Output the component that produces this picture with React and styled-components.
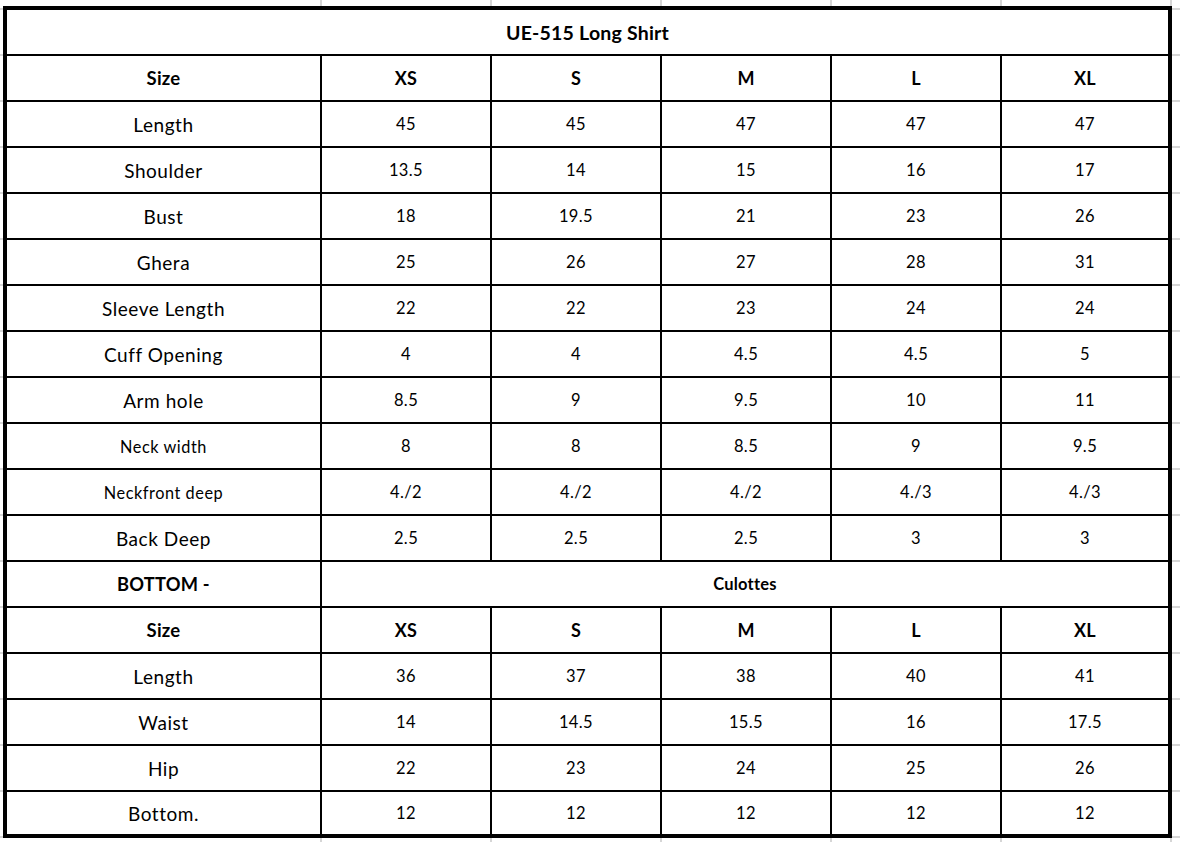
import styled, { createGlobalStyle } from "styled-components";

const GlobalStyle = createGlobalStyle`
    html, body {
        margin: 0;
        padding: 0;
    }
    body {
        width: 1180px;
        height: 842px;
        overflow: hidden;
        font-family: Lato, "Open Sans", sans-serif;
        color: #000;
        background-color: #fff;
        background-image:
            repeating-linear-gradient(to right, #d6d6d6 0 2px, transparent 2px 170px),
            repeating-linear-gradient(to bottom, transparent 0 8px, #d6d6d6 8px 10px, transparent 10px 46px);
        background-position: 320px 0, 0 0;
        background-size: 852px 100%, 100% 100%;
        background-repeat: no-repeat;
    }
`;

const Page = styled.div`
    padding: 6px 0 0 3px;
`;

const Sheet = styled.div`
    display: grid;
    grid-template-columns: 313px 168px 168px 168px 168px 166px;
    grid-template-rows: repeat(17, 44px) 42px;
    gap: 2px;
    width: max-content;
    border: 4px solid #000;
    background-color: #000;
`;

const Cell = styled.div`
    display: flex;
    align-items: center;
    justify-content: center;
    background-color: #fff;
    font-size: ${ p => p.$size || 16.5 }px;
    font-weight: ${ p => p.$bold ? 700 : 400 };
    letter-spacing: ${ p => p.$bold ? 0.2 : 0.4 }px;
    grid-column: ${ p => p.$span ? `span ${ p.$span }` : "auto" };
    white-space: nowrap;
`;

const Label = styled(Cell)`
    font-size: ${ p => p.$size || 19 }px;
    letter-spacing: ${ p => p.$bold ? 0.2 : 0.55 }px;
`;

const sizes = [ "XS", "S", "M", "L", "XL" ];

const shirt = [
    [ "Length", [ "45", "45", "47", "47", "47" ] ],
    [ "Shoulder", [ "13.5", "14", "15", "16", "17" ] ],
    [ "Bust", [ "18", "19.5", "21", "23", "26" ] ],
    [ "Ghera", [ "25", "26", "27", "28", "31" ] ],
    [ "Sleeve Length", [ "22", "22", "23", "24", "24" ] ],
    [ "Cuff Opening", [ "4", "4", "4.5", "4.5", "5" ] ],
    [ "Arm hole", [ "8.5", "9", "9.5", "10", "11" ] ],
    [ "Neck width", [ "8", "8", "8.5", "9", "9.5" ], 16.3 ],
    [ "Neckfront deep", [ "4./2", "4./2", "4./2", "4./3", "4./3" ], 16.3 ],
    [ "Back Deep", [ "2.5", "2.5", "2.5", "3", "3" ] ],
];

const bottom = [
    [ "Length", [ "36", "37", "38", "40", "41" ] ],
    [ "Waist", [ "14", "14.5", "15.5", "16", "17.5" ] ],
    [ "Hip", [ "22", "23", "24", "25", "26" ] ],
    [ "Bottom.", [ "12", "12", "12", "12", "12" ] ],
];

const SizeRow = () => (
    <>
        <Label $bold $size={ 18.5 }>Size</Label>
        { sizes.map( s => <Cell key={ s } $bold $size={ 18 }>{ s }</Cell> ) }
    </>
);

const Row = ( { label, values, small } ) => (
    <>
        <Label $size={ small }>{ label }</Label>
        { values.map( ( v, i ) => <Cell key={ i }>{ v }</Cell> ) }
    </>
);

const Rows = ( { rows } ) => rows.map( ( [ label, values, small ] ) => (
    <Row key={ label } label={ label } values={ values } small={ small } />
) );

const App = () => (
    <Page>
        <GlobalStyle />
        <Sheet>
            <Cell $span={ 6 } $bold $size={ 19.5 }>UE-515 Long Shirt</Cell>
            <SizeRow />
            <Rows rows={ shirt } />
            <Label $bold $size={ 18.3 }>BOTTOM -</Label>
            <Cell $span={ 5 } $bold $size={ 16.5 }>Culottes</Cell>
            <SizeRow />
            <Rows rows={ bottom } />
        </Sheet>
    </Page>
);

export default App;
